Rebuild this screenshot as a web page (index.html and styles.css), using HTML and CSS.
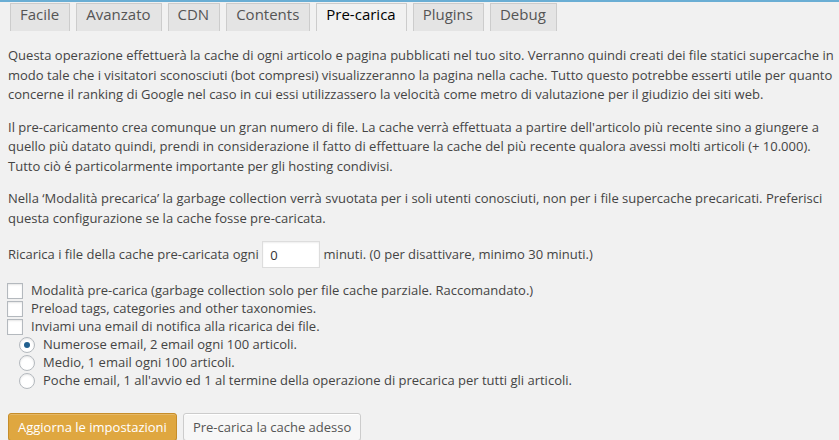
FILE: index.html
```html
<!DOCTYPE html>
<html lang="it">
<head>
<meta charset="utf-8">
<title>Pre-carica</title>
<link rel="stylesheet" href="styles.css">
</head>
<body>
<div class="topline"></div>
<nav class="tabs">
  <a class="tab">Facile</a>
  <a class="tab">Avanzato</a>
  <a class="tab">CDN</a>
  <a class="tab">Contents</a>
  <a class="tab active">Pre-carica</a>
  <a class="tab">Plugins</a>
  <a class="tab">Debug</a>
</nav>
<main class="content">
  <p>Questa operazione effettuerà la cache di ogni articolo e pagina pubblicati nel tuo sito. Verranno quindi creati dei file statici supercache in modo tale che i visitatori sconosciuti (bot compresi) visualizzeranno la pagina nella cache. Tutto questo potrebbe esserti utile per quanto concerne il ranking di Google nel caso in cui essi utilizzassero la velocità come metro di valutazione per il giudizio dei siti web.</p>
  <p>Il pre-caricamento crea comunque un gran numero di file. La cache verrà effettuata a partire dell'articolo più recente sino a giungere a quello più datato quindi, prendi in considerazione il fatto di effettuare la cache del più recente qualora avessi molti articoli (+ 10.000). Tutto ciò é particolarmente importante per gli hosting condivisi.</p>
  <p>Nella ‘Modalità precarica’ la garbage collection verrà svuotata per i soli utenti conosciuti, non per i file supercache precaricati. Preferisci questa configurazione se la cache fosse pre-caricata.</p>
  <form class="form">
    <p class="reload">Ricarica i file della cache pre-caricata ogni <input class="num" type="text" value="0"> minuti. (0 per disattivare, minimo 30 minuti.)</p>
    <div class="opts">
      <label class="row"><input class="cb" type="checkbox">Modalità pre-carica (garbage collection solo per file cache parziale. Raccomandato.)</label>
      <label class="row"><input class="cb" type="checkbox">Preload tags, categories and other taxonomies.</label>
      <label class="row"><input class="cb" type="checkbox">Inviami una email di notifica alla ricarica dei file.</label>
      <label class="row sub"><input class="rb" type="radio" name="freq" checked>Numerose email, 2 email ogni 100 articoli.</label>
      <label class="row sub"><input class="rb" type="radio" name="freq">Medio, 1 email ogni 100 articoli.</label>
      <label class="row sub"><input class="rb" type="radio" name="freq">Poche email, 1 all'avvio ed 1 al termine della operazione di precarica per tutti gli articoli.</label>
    </div>
    <div class="actions">
      <button class="btn primary" type="button">Aggiorna le impostazioni</button>
      <button class="btn" type="button">Pre-carica la cache adesso</button>
    </div>
  </form>
</main>
</body>
</html>
```
FILE: styles.css
```css
html, body {
  margin: 0;
  padding: 0;
  background: #f1f1f1;
}
body {
  font-family: "Open Sans", "Liberation Sans", sans-serif;
  font-size: 13px;
  color: #444;
  line-height: 1.5;
  overflow: hidden;
}
.topline {
  height: 2px;
  background: #6aaed4;
}
.tabs {
  display: flex;
  gap: 6px;
  padding: 1px 0 0 10px;
}
.tab {
  display: block;
  border: 1px solid #ccc;
  border-bottom: none;
  background: #e4e4e4;
  color: #555;
  font-size: 15px;
  line-height: 20px;
  padding: 0 10px 7px 9px;
  text-decoration: none;
}
.tab.active {
  background: #f1f1f1;
  color: #000;
}
.content {
  padding: 2px 5px 0 8px;
}
.content p {
  margin: 13px 0;
}
.form {
  margin: 0;
}
.content .reload {
  display: flex;
  align-items: center;
  white-space: pre;
  margin: 11px 0 14px;
}
.num {
  box-sizing: border-box;
  width: 58px;
  height: 27px;
  margin: 0;
  padding: 3px 7px;
  border: 1px solid #ddd;
  background: #fff;
  box-shadow: inset 0 1px 2px rgba(0,0,0,.07);
  font-family: inherit;
  font-size: 13px;
  color: #333;
  outline: none;
}
.opts {
  display: flex;
  flex-direction: column;
}
.row {
  display: flex;
  align-items: center;
  height: 18px;
}
.row.sub {
  padding-left: 12px;
}
.cb, .rb {
  -webkit-appearance: none;
  appearance: none;
  box-sizing: border-box;
  width: 16px;
  height: 16px;
  margin: 0 8px 0 -1px;
  border: 1px solid #b4b9be;
  background: #fff;
  box-shadow: inset 0 1px 2px rgba(0,0,0,.1);
  flex: none;
  position: relative;
}
.rb {
  border-radius: 50%;
}
.rb:checked::before {
  content: "";
  position: absolute;
  left: 4px;
  top: 4px;
  width: 6px;
  height: 6px;
  border-radius: 50%;
  background: #21608f;
}
.actions {
  display: flex;
  gap: 6px;
  margin-top: 23px;
}
.btn {
  box-sizing: border-box;
  height: 28px;
  padding: 0 9px 1px;
  border: 1px solid #ccc;
  border-radius: 3px;
  background: #f7f7f7;
  box-shadow: inset 0 1px 0 #fff, 0 1px 0 rgba(0,0,0,.08);
  color: #555;
  font-family: inherit;
  font-size: 13px;
  line-height: 26px;
  cursor: pointer;
}
.btn.primary {
  background: #dfa740;
  border-color: #c68d2a;
  box-shadow: inset 0 1px 0 rgba(255,255,255,.2), 0 1px 0 rgba(0,0,0,.15);
  color: #fff;
}
```
